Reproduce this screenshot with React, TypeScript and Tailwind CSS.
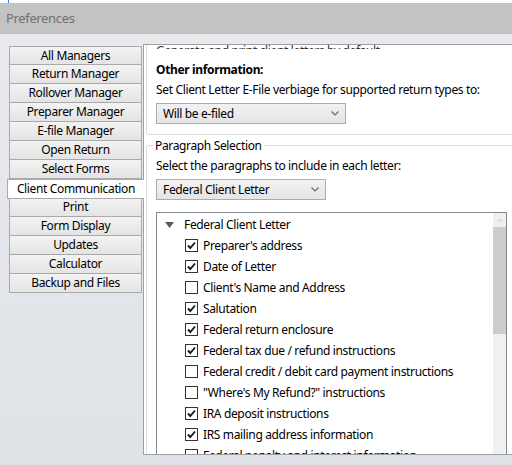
import React from 'react'

const NAV = [
  'All Managers',
  'Return Manager',
  'Rollover Manager',
  'Preparer Manager',
  'E-file Manager',
  'Open Return',
  'Select Forms',
  'Client Communication',
  'Print',
  'Form Display',
  'Updates',
  'Calculator',
  'Backup and Files',
]

const ITEMS: { label: string; checked: boolean }[] = [
  { label: "Preparer's address", checked: true },
  { label: 'Date of Letter', checked: true },
  { label: "Client's Name and Address", checked: false },
  { label: 'Salutation', checked: true },
  { label: 'Federal return enclosure', checked: true },
  { label: 'Federal tax due / refund instructions', checked: true },
  { label: 'Federal credit / debit card payment instructions', checked: false },
  { label: '"Where\'s My Refund?" instructions', checked: false },
  { label: 'IRA deposit instructions', checked: true },
  { label: 'IRS mailing address information', checked: true },
  { label: 'Federal penalty and interest information', checked: false },
]

function Chevron() {
  return (
    <svg width="8" height="5" viewBox="0 0 8 5" className="shrink-0">
      <path d="M0.5 0.5 L4 4 L7.5 0.5" fill="none" stroke="#6b6b6b" strokeWidth="1.2" />
    </svg>
  )
}

function Select({ value, width }: { value: string; width: string }) {
  return (
    <div
      className={`${width} h-[21px] flex items-center justify-between pl-[6px] pr-[6px] border border-[#acacac] bg-gradient-to-b from-[#f2f2f2] to-[#e5e5e5] text-black`}
    >
      <span>{value}</span>
      <Chevron />
    </div>
  )
}

function Checkbox({ checked }: { checked: boolean }) {
  return (
    <div className="w-[13px] h-[13px] border border-[#333333] bg-white flex items-center justify-center shrink-0">
      {checked && (
        <svg width="11" height="11" viewBox="0 0 11 11">
          <path d="M2 5.5 L4.3 8 L9 2.5" fill="none" stroke="#1a1a1a" strokeWidth="1.9" />
        </svg>
      )}
    </div>
  )
}

export default function App() {
  return (
    <div className="w-[512px] h-[465px] overflow-hidden bg-[#e1e4e8] flex flex-col font-['Noto_Sans',sans-serif] text-[12px] tracking-[-0.35px] text-black">
      {/* window top edge */}
      <div className="h-[3px] bg-white flex">
        <div className="ml-[8px] w-[1px] bg-[#3b7dd8]" />
      </div>
      {/* title */}
      <div className="h-[31px] bg-[#c3c3c3] flex items-center px-[6px] text-[13px] text-[#707070]">
        Preferences
      </div>

      <div className="flex flex-1 min-h-0 bg-gradient-to-b from-[#e8eaee] to-[#dfe2e6]">
        {/* left nav */}
        <div className="w-[143px] shrink-0 pt-[12px] flex flex-col">
          {NAV.map((n, i) =>
            n === 'Client Communication' ? (
              <div
                key={n}
                className="relative z-10 ml-[7px] w-[137px] h-[20px] bg-white border border-r-0 border-[#a9a9a9] -mb-[1px] flex items-center justify-center leading-none"
              >
                {n}
              </div>
            ) : (
              <div
                key={n}
                className={`ml-[9px] w-[133px] h-[19px] border-x border-b border-[#a9a9a9] bg-gradient-to-b from-[#f3f3f3] to-[#e4e4e4] flex items-center justify-center leading-none ${
                  i === 0 ? 'border-t' : ''
                }`}
              >
                {n}
              </div>
            )
          )}
        </div>

        {/* right panel */}
        <div className="flex-1 mt-[10px] mb-[10px] bg-white border-l border-t border-b border-[#a0a0a0] overflow-hidden flex flex-col">
          {/* Other information group (top clipped) */}
          <div className="ml-[2px] -mr-[8px] border-l border-b border-r border-[#dcdcdc] rounded-b-[3px] pl-[9px] pb-[10px]">
            <div className="h-[4px] overflow-hidden">
              <div className="-mt-[2px] leading-[16px] text-[#333]">Generate and print client letters by default</div>
            </div>
            <div className="mt-[13px] font-bold leading-[16px]">Other information:</div>
            <div className="mt-[4px] leading-[16px]">Set Client Letter E-File verbiage for supported return types to:</div>
            <div className="mt-[5px]">
              <Select value="Will be e-filed" width="w-[190px]" />
            </div>
          </div>

          {/* Paragraph Selection group */}
          <div className="ml-[2px] -mr-[8px] mt-[10px] flex-1 min-h-0 border-l border-[#dcdcdc] rounded-tl-[3px] flex flex-col">
            <div className="flex items-center h-[1px] -mr-[1px]">
              <div className="w-[6px] h-[1px] bg-[#dcdcdc]" />
              <div className="px-[2px] leading-[16px]">Paragraph Selection</div>
              <div className="flex-1 h-[1px] bg-[#dcdcdc]" />
            </div>
            <div className="pl-[9px] flex flex-col flex-1 min-h-0">
              <div className="mt-[12px] leading-[16px]">Select the paragraphs to include in each letter:</div>
              <div className="mt-[5px]">
                <Select value="Federal Client Letter" width="w-[170px]" />
              </div>
              {/* tree */}
              <div className="mt-[12px] w-[351px] flex-1 min-h-0 border-l border-t border-r border-[#828790] flex overflow-hidden">
                <div className="flex-1 pt-[1px]">
                  <div className="h-[21px] flex items-center">
                    <svg width="9" height="6" viewBox="0 0 9 6" className="ml-[8px] mr-[10px]">
                      <path d="M0 0 L9 0 L4.5 6 Z" fill="#5c5c5c" />
                    </svg>
                    <span>Federal Client Letter</span>
                  </div>
                  {ITEMS.map((it) => (
                    <div key={it.label} className="h-[21px] flex items-center pl-[28px] gap-[5px] whitespace-nowrap">
                      <Checkbox checked={it.checked} />
                      <span>{it.label}</span>
                    </div>
                  ))}
                </div>
                {/* scrollbar */}
                <div className="w-[13px] shrink-0 flex flex-col bg-[#f0f0f0]">
                  <div className="h-[14px] flex items-center justify-center">
                    <svg width="5" height="3" viewBox="0 0 5 3">
                      <path d="M0.5 2.5 L2.5 0.5 L4.5 2.5" fill="none" stroke="#b0b0b0" strokeWidth="0.8" />
                    </svg>
                  </div>
                  <div className="h-[107px] bg-[#cdcdcd]" />
                </div>
              </div>
            </div>
          </div>
        </div>
      </div>
    </div>
  )
}
